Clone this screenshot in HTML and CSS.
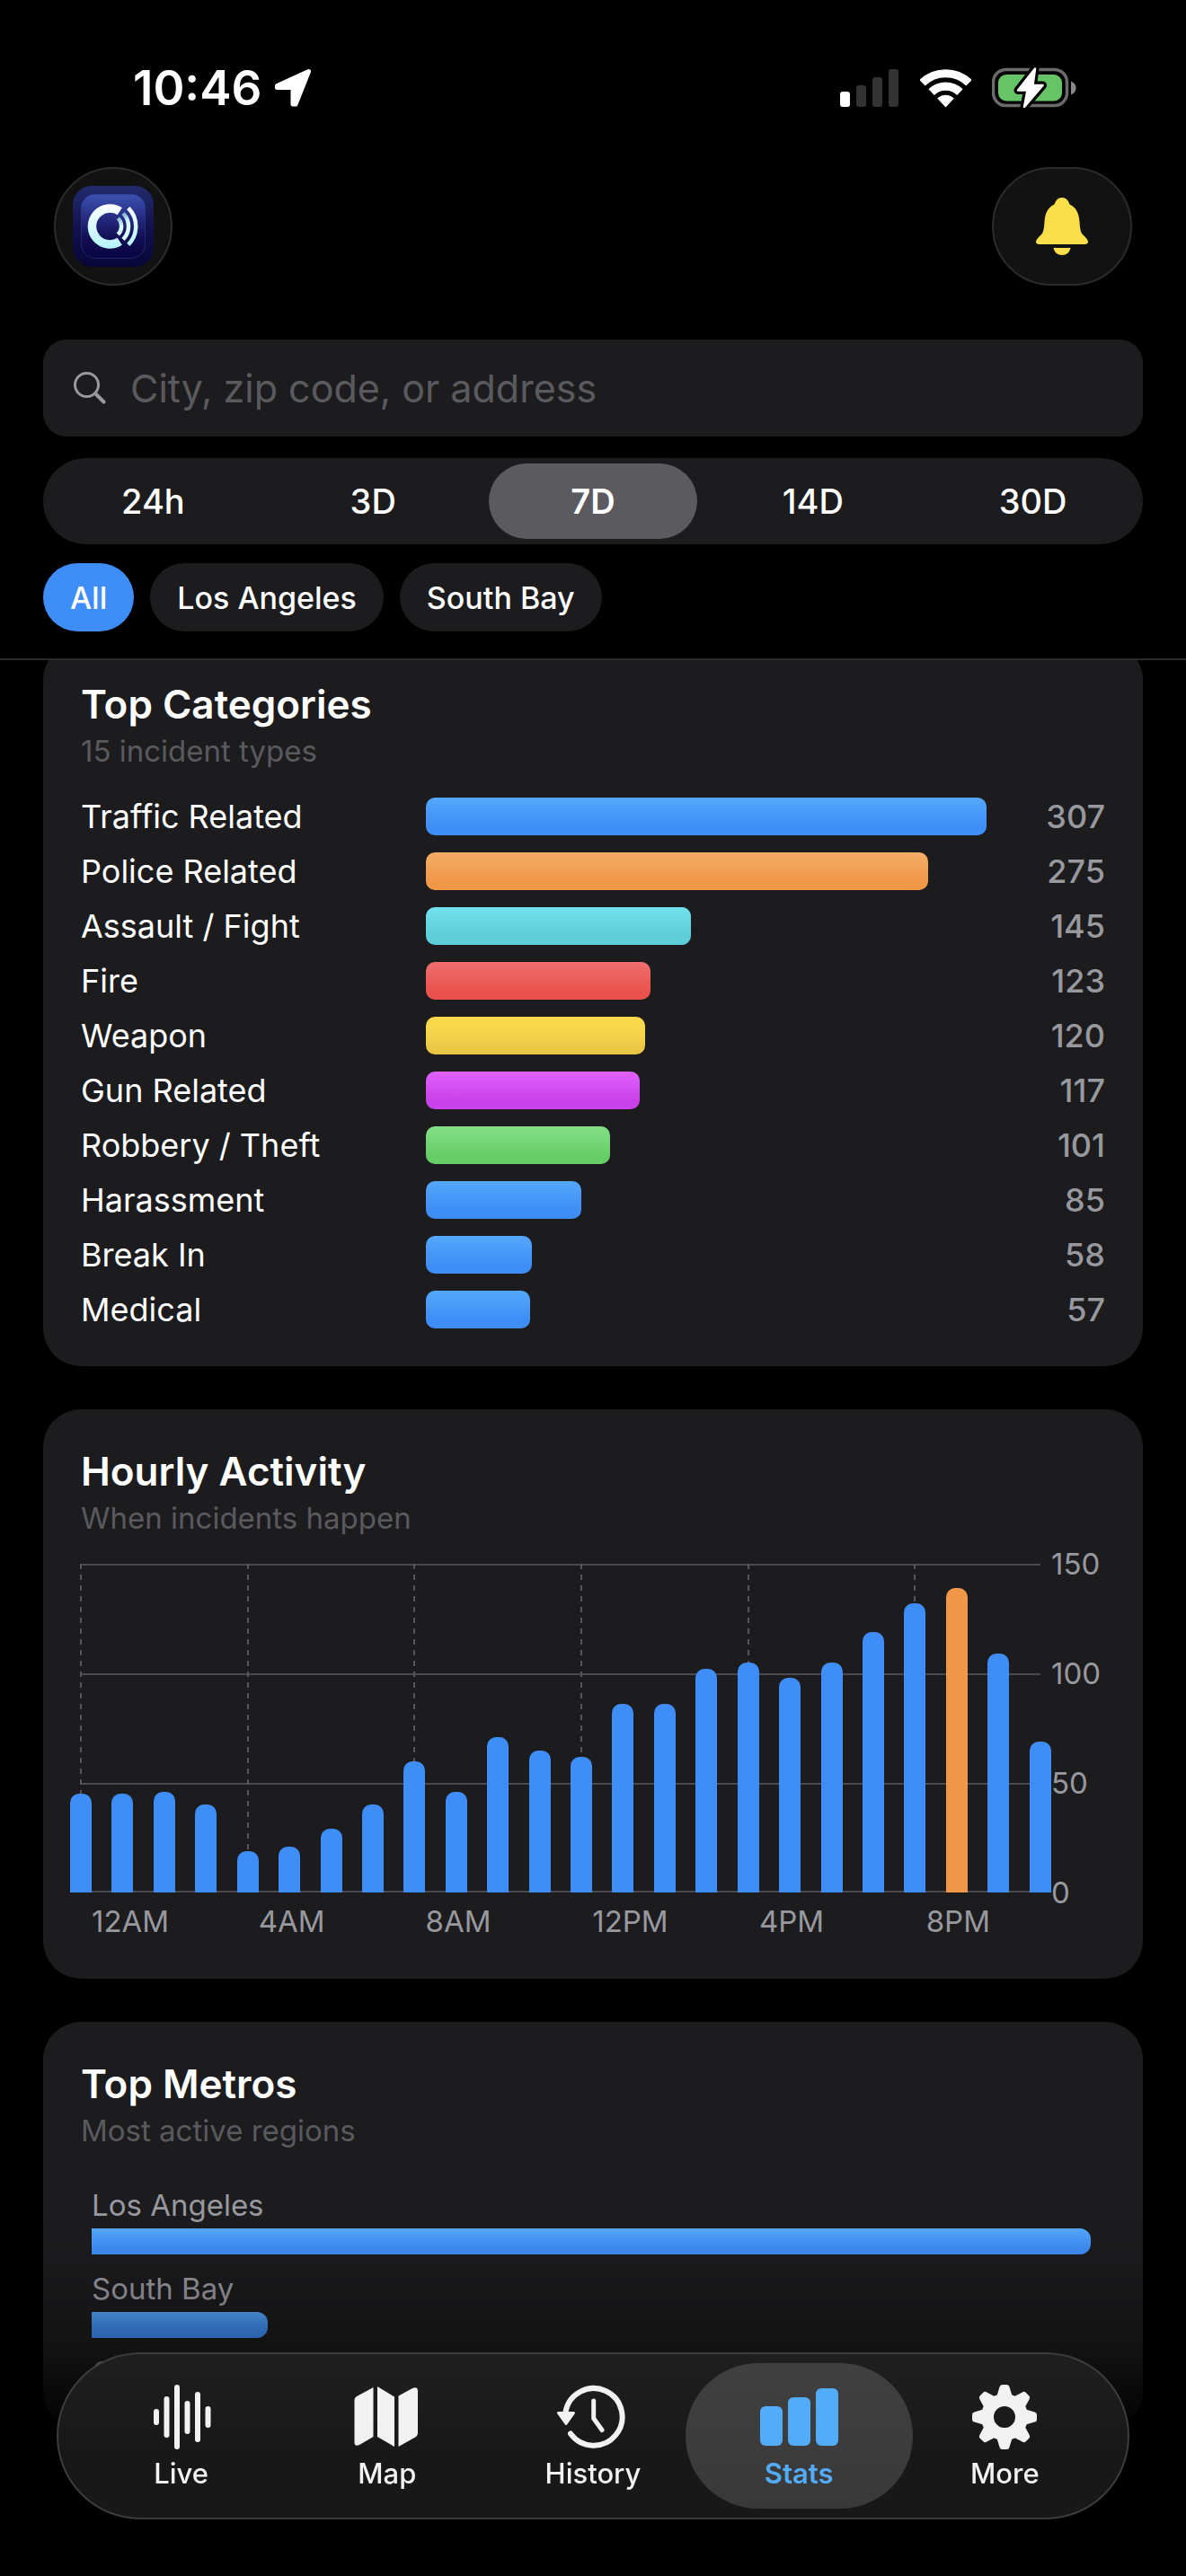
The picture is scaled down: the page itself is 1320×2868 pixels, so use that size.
FILE: index.html
```html
<!DOCTYPE html>
<html lang="en">
<head>
<meta charset="utf-8">
<meta name="viewport" content="width=device-width, initial-scale=1">
<title>Stats</title>
<link rel="stylesheet" href="styles.css">
</head>
<body>
<header class="top">
  <div class="status">
    <div class="status-left">
      <span class="time">10:46</span>
      <svg width="42" height="44" viewBox="0 0 42 44" aria-hidden="true"><path d="M38.500 3.500L3.500 19.500V21.500H21V40H24Z" fill="#fff" stroke="#fff" stroke-width="5" stroke-linejoin="round"/></svg>
    </div>
    <div class="status-right">
      <svg width="66" height="42" viewBox="0 0 66 42" aria-hidden="true"><rect x="0" y="25" width="11" height="17" rx="3" fill="#fff"/><g fill="#333"><rect x="18" y="18" width="11" height="24" rx="3"/><rect x="36" y="9" width="11" height="33" rx="3"/><rect x="54" y="0" width="11" height="42" rx="3"/></g></svg>
      <svg width="57" height="43" viewBox="0 0 57 43" aria-hidden="true"><g fill="none" stroke="#fff" stroke-width="9.200"><path d="M2.500 15.300A37.300 37.300 0 0 1 54.500 15.300"/><path d="M12.600 25.600A22.800 22.800 0 0 1 44.400 25.600"/></g><path d="M19.200 32.500A13.300 13.300 0 0 1 37.800 32.500L28.500 42.500Z" fill="#fff"/></svg>
      <svg width="94" height="46" viewBox="0 0 94 46" aria-hidden="true"><rect x="1.500" y="2.500" width="82" height="40" rx="14" fill="none" stroke="#6b6b6b" stroke-width="3.500"/><rect x="7" y="8" width="71" height="29.500" rx="9" fill="#65c466"/><path d="M88 15.500C92 17 93.500 20 93.500 23S92 29 88 30.500Z" fill="#8a8a8a"/><path d="M48 1.500L29 25.500H39.500L36 44L56.500 20H45.500Z" fill="#fff" stroke="#000" stroke-width="9" stroke-linejoin="round"/><path d="M48 1.500L29 25.500H39.500L36 44L56.500 20H45.500Z" fill="#fff" stroke="#fff" stroke-width="2.500" stroke-linejoin="round"/></svg>
    </div>
  </div>

  <div class="actions">
    <button class="round-btn app-btn" type="button" aria-label="App home">
      <svg width="90" height="90" viewBox="0 0 90 90" aria-hidden="true">
        <defs>
          <linearGradient id="outer" x1="0" y1="0" x2="0" y2="1"><stop offset="0" stop-color="#232c6e"/><stop offset=".5" stop-color="#12134f"/><stop offset="1" stop-color="#080638"/></linearGradient>
          <linearGradient id="inner" x1="0" y1="0" x2="0" y2="1"><stop offset="0" stop-color="#3a52b0"/><stop offset=".35" stop-color="#272c84"/><stop offset=".7" stop-color="#120d52"/><stop offset="1" stop-color="#0a0442"/></linearGradient>
          <linearGradient id="glyph" x1="0" y1="20" x2="0" y2="70" gradientUnits="userSpaceOnUse"><stop offset="0" stop-color="#fff"/><stop offset="1" stop-color="#b2f4fa"/></linearGradient>
          <linearGradient id="wave" x1="46" y1="30" x2="56" y2="44" gradientUnits="userSpaceOnUse"><stop offset="0" stop-color="#4b84b4"/><stop offset="1" stop-color="#d8fbff"/></linearGradient>
        </defs>
        <rect width="90" height="90" rx="21" fill="url(#outer)"/>
        <rect x="9.500" y="9.500" width="71" height="71" rx="15" fill="url(#inner)" stroke="#3c4aa0" stroke-opacity=".4"/>
        <path d="M52.300 28.200A20 20 0 1 0 52.300 61.800" fill="none" stroke="url(#glyph)" stroke-width="9.500"/>
        <path d="M61.800 24.700A28.700 28.700 0 0 1 61.800 65.300" fill="none" stroke="url(#glyph)" stroke-width="4.500"/>
        <path d="M56 30.500A20.500 20.500 0 0 1 56 59.500" fill="none" stroke="url(#wave)" stroke-width="4.500"/>
        <path d="M50.300 36A12.500 12.500 0 0 1 50.300 54" fill="none" stroke="url(#wave)" stroke-width="4.500"/>
      </svg>
    </button>
    <button class="round-btn bell-btn" type="button" aria-label="Notifications">
      <svg width="60" height="66" viewBox="0 0 60 66" fill="#fadf4b" aria-hidden="true"><path d="M30 1C34.500 1 37 4 38.500 8.500C46 12 49 19 49.500 28C50 35 50.500 39 52.500 41.500C55.500 44.500 59 47.500 59 50.500C59 52 57.500 53 55.500 53H4.500C2.500 53 1 52 1 50.500C1 47.500 4.500 44.500 7.500 41.500C9.500 39 10 35 10.500 28C11 19 14 12 21.500 8.500C23 4 25.500 1 30 1Z"/><path d="M20.500 57H39.500C38.500 62 35 65 30 65S21.500 62 20.500 57Z"/></svg>
    </button>
  </div>

  <label class="search">
    <svg width="36" height="36" viewBox="0 0 36 36" fill="none" stroke="#98989f" stroke-width="3" stroke-linecap="round" aria-hidden="true"><circle cx="14.500" cy="14.500" r="13"/><path d="M24 24L33.500 33.500" stroke-width="4"/></svg>
    <input type="text" placeholder="City, zip code, or address" aria-label="Search location">
  </label>

  <div class="segments" role="group" aria-label="Time range">
    <button type="button">24h</button>
    <button type="button">3D</button>
    <button type="button" class="selected" aria-pressed="true">7D</button>
    <button type="button">14D</button>
    <button type="button">30D</button>
  </div>

  <div class="chips" role="group" aria-label="Region">
    <button type="button" class="chip active" aria-pressed="true">All</button>
    <button type="button" class="chip">Los Angeles</button>
    <button type="button" class="chip">South Bay</button>
  </div>
</header>

<main class="content">
  <section class="card">
    <h2>Top Categories</h2>
    <p class="sub">15 incident types</p>
    <ul class="categories">
      <li><span class="name">Traffic Related</span><span class="track"><span class="bar blue" style="width:100%"></span></span><span class="count">307</span></li>
      <li><span class="name">Police Related</span><span class="track"><span class="bar orange" style="width:89.6%"></span></span><span class="count">275</span></li>
      <li><span class="name">Assault / Fight</span><span class="track"><span class="bar cyan" style="width:47.2%"></span></span><span class="count">145</span></li>
      <li><span class="name">Fire</span><span class="track"><span class="bar red" style="width:40.1%"></span></span><span class="count">123</span></li>
      <li><span class="name">Weapon</span><span class="track"><span class="bar yellow" style="width:39.1%"></span></span><span class="count">120</span></li>
      <li><span class="name">Gun Related</span><span class="track"><span class="bar purple" style="width:38.1%"></span></span><span class="count">117</span></li>
      <li><span class="name">Robbery / Theft</span><span class="track"><span class="bar green" style="width:32.9%"></span></span><span class="count">101</span></li>
      <li><span class="name">Harassment</span><span class="track"><span class="bar blue" style="width:27.7%"></span></span><span class="count">85</span></li>
      <li><span class="name">Break In</span><span class="track"><span class="bar blue" style="width:18.9%"></span></span><span class="count">58</span></li>
      <li><span class="name">Medical</span><span class="track"><span class="bar blue" style="width:18.6%"></span></span><span class="count">57</span></li>
    </ul>
  </section>

  <section class="card">
    <h2>Hourly Activity</h2>
    <p class="sub">When incidents happen</p>
    <div class="chart">
      <div class="plot">
        <div class="hours">
          <div class="hour"><i style="height:30%"></i></div>
          <div class="hour"><i style="height:30%"></i></div>
          <div class="hour"><i style="height:30.7%"></i></div>
          <div class="hour"><i style="height:26.7%"></i></div>
          <div class="hour"><i style="height:12.7%"></i></div>
          <div class="hour"><i style="height:14%"></i></div>
          <div class="hour"><i style="height:19.3%"></i></div>
          <div class="hour"><i style="height:26.7%"></i></div>
          <div class="hour"><i style="height:40%"></i></div>
          <div class="hour"><i style="height:30.7%"></i></div>
          <div class="hour"><i style="height:47.3%"></i></div>
          <div class="hour"><i style="height:43.3%"></i></div>
          <div class="hour"><i style="height:41.3%"></i></div>
          <div class="hour"><i style="height:57.3%"></i></div>
          <div class="hour"><i style="height:57.3%"></i></div>
          <div class="hour"><i style="height:68%"></i></div>
          <div class="hour"><i style="height:70%"></i></div>
          <div class="hour"><i style="height:65.3%"></i></div>
          <div class="hour"><i style="height:70%"></i></div>
          <div class="hour"><i style="height:79.3%"></i></div>
          <div class="hour"><i style="height:88%"></i></div>
          <div class="hour peak"><i style="height:92.7%"></i></div>
          <div class="hour"><i style="height:72.7%"></i></div>
          <div class="hour"><i style="height:46%"></i></div>
        </div>
      </div>
      <div class="y-axis"><span>150</span><span>100</span><span>50</span><span>0</span></div>
      <div class="x-axis"><span>12AM</span><span>4AM</span><span>8AM</span><span>12PM</span><span>4PM</span><span>8PM</span></div>
    </div>
  </section>

  <section class="card card-last">
    <h2>Top Metros</h2>
    <p class="sub">Most active regions</p>
    <ul class="metros">
      <li><span>Los Angeles</span><span class="metro-bar" style="width:100%"></span></li>
      <li><span>South Bay</span><span class="metro-bar" style="width:17.6%"></span></li>
      <li><span>Orange County</span><span class="metro-bar" style="width:17.6%"></span></li>
    </ul>
  </section>
</main>

<div class="fade"></div>

<nav class="tabs" aria-label="Main">
  <a href="#live">
    <svg width="88" height="72" viewBox="-2 0 88 72" stroke="#f2f2f2" stroke-width="6" stroke-linecap="round" aria-hidden="true"><path d="M14 30V42M25.500 16V56M37 3V69M48.500 21V52M60 11V61M71.500 27V45"/></svg>
    <span>Live</span>
  </a>
  <a href="#map">
    <svg width="88" height="72" viewBox="-2 0 88 72" fill="#f2f2f2" aria-hidden="true"><path d="M26.500 3V58L11 67Q5.500 69.500 5.500 64V17Q5.500 14.500 8 13Z"/><path d="M31 2L50 13.500V69L31 58Z"/><path d="M54.500 12.500L70 4Q76 1.500 76 7V54Q76 56.500 74 58L54.500 69Z"/></svg>
    <span>Map</span>
  </a>
  <a href="#history">
    <svg width="88" height="72" viewBox="-2 0 88 72" fill="none" stroke="#f2f2f2" stroke-linecap="round" stroke-linejoin="round" aria-hidden="true"><path d="M11.500 30A31.800 31.800 0 1 1 17 54.500" stroke-width="6"/><path d="M42.700 18V37.500L52 50.500" stroke-width="5"/><path d="M3.500 31.500H20.500L12 43.500Z" fill="#f2f2f2" stroke-width="3"/></svg>
    <span>History</span>
  </a>
  <a href="#stats" class="current" aria-current="page">
    <svg width="88" height="72" viewBox="-2 0 88 72" fill="#53acf9" aria-hidden="true"><rect x="-1" y="24" width="25" height="44" rx="6"/><rect x="30" y="14" width="25" height="54" rx="6"/><rect x="61" y="4" width="25" height="64" rx="6"/></svg>
    <span>Stats</span>
  </a>
  <a href="#more">
    <svg width="88" height="72" viewBox="-2 0 88 72" aria-hidden="true">
      <defs><path id="tooth" d="M36.500 2.500Q37 0 39.500 0H44.500Q47 0 47.500 2.500L51 14H33Z" fill="#f2f2f2"/></defs>
      <use href="#tooth"/><use href="#tooth" transform="rotate(45 42 36)"/><use href="#tooth" transform="rotate(90 42 36)"/><use href="#tooth" transform="rotate(135 42 36)"/><use href="#tooth" transform="rotate(180 42 36)"/><use href="#tooth" transform="rotate(225 42 36)"/><use href="#tooth" transform="rotate(270 42 36)"/><use href="#tooth" transform="rotate(315 42 36)"/>
      <circle cx="42" cy="36" r="19" fill="none" stroke="#f2f2f2" stroke-width="14"/>
    </svg>
    <span>More</span>
  </a>
</nav>
</body>
</html>
```
FILE: styles.css
```css
* {
  box-sizing: border-box;
}

body {
  margin: 0;
  min-height: 100vh;
  background: #000;
  color: #fff;
  font-family: Inter, "Liberation Sans", sans-serif;
}

button,
input {
  margin: 0;
  padding: 0;
  border: 0;
  background: none;
  color: inherit;
  font: inherit;
}

h2,
p,
ul {
  margin: 0;
  padding: 0;
}

ul {
  list-style: none;
}

svg {
  display: block;
  flex: none;
}

/* Header */
.top {
  padding: 66px 48px 30px;
  border-bottom: 2px solid #2b2b2d;
}

.status {
  display: flex;
  justify-content: space-between;
  align-items: center;
  padding: 0 74px 0 100px;
  margin-bottom: 56px;
}

.status-left,
.status-right {
  display: flex;
  align-items: center;
}

.status-left {
  gap: 14px;
}

.status-right {
  gap: 23px;
}

.time {
  font-size: 53px;
  line-height: 64px;
  font-weight: 600;
}

.actions {
  display: flex;
  justify-content: space-between;
  padding: 0 12px;
  margin-bottom: 60px;
}

.round-btn {
  display: flex;
  align-items: center;
  justify-content: center;
  height: 132px;
  border: 2px solid #2c2c2c;
  border-radius: 66px;
  background: #121212;
}

.app-btn {
  width: 132px;
}

.bell-btn {
  width: 156px;
}

.search {
  display: flex;
  align-items: center;
  gap: 27px;
  height: 108px;
  padding: 0 34px;
  margin-bottom: 24px;
  border-radius: 26px;
  background: #1c1c1e;
}

.search input {
  flex: 1;
  min-width: 0;
  font-size: 43px;
  outline: none;
}

.search input::placeholder {
  color: #5a5a5e;
  opacity: 1;
}

.segments {
  display: grid;
  grid-template-columns: repeat(5, 1fr);
  gap: 12px;
  height: 96px;
  padding: 6px;
  margin-bottom: 21px;
  border-radius: 48px;
  background: #1c1c1e;
  font-size: 38px;
  font-weight: 500;
}

.segments button {
  border-radius: 42px;
}

.segments .selected {
  background: #5b5a5f;
  font-weight: 600;
}

.chips {
  display: flex;
  gap: 18px;
}

.chip {
  height: 76px;
  padding: 0 30px;
  border-radius: 38px;
  background: #1c1c1e;
  font-size: 34px;
  font-weight: 500;
}

.chip.active {
  background: #3f8ef7;
}

/* Cards */
.content {
  display: flex;
  flex-direction: column;
  gap: 48px;
  padding: 0 48px 162px;
  overflow: hidden;
}

.card {
  padding: 42px;
  border-radius: 42px;
  background: #1c1c1e;
}

/* The first card is scrolled part way under the header. */
.card:first-child {
  margin-top: -20px;
}

.card-last {
  padding-bottom: 10px;
}

h2 {
  margin-bottom: 3px;
  font-size: 44px;
  line-height: 54px;
  font-weight: 600;
}

.sub {
  color: #5a5a5e;
  font-size: 33px;
  line-height: 44px;
}

/* Top categories */
.categories {
  display: flex;
  flex-direction: column;
  gap: 19px;
  margin-top: 30px;
}

.categories li {
  display: grid;
  grid-template-columns: 384px 1fr 132px;
  align-items: center;
  height: 42px;
  font-size: 36px;
  line-height: 42px;
}

.track {
  height: 42px;
}

.bar {
  display: block;
  height: 42px;
  border-radius: 10px;
}

.blue { background: linear-gradient(#55a8fb, #3f8ef7 75%); }
.orange { background: linear-gradient(#f4ae68, #f09848 75%); }
.cyan { background: linear-gradient(#71e2ee, #5ecedb 75%); }
.red { background: linear-gradient(#ef7070, #ea534d 75%); }
.yellow { background: linear-gradient(#fad84b 25%, #e7c443); }
.purple { background: linear-gradient(#e062fb, #c941ea 75%); }
.green { background: linear-gradient(#85e088, #67cd67 75%); }

.count {
  color: #98989f;
  font-weight: 500;
  text-align: right;
}

/* Hourly activity */
.chart {
  display: grid;
  grid-template-columns: 1fr 60px;
  column-gap: 12px;
  row-gap: 10px;
  margin-top: 29px;
  color: #98989f;
  font-size: 33px;
  line-height: 44px;
}

.plot {
  height: 366px;
  background: repeating-linear-gradient(#4a4a4c 0 2px, transparent 2px 122px);
  border-bottom: 2px solid #4a4a4c;
}

.hours {
  display: flex;
  justify-content: space-between;
  height: 366px;
  margin: 0 -12px;
}

.hour {
  display: flex;
  align-items: flex-end;
  width: 24px;
}

.hour:nth-child(4n + 1) {
  background: repeating-linear-gradient(#565658 0 6px, transparent 6px 12px) center / 2px 100% no-repeat;
}

.hour i {
  flex: 1;
  border-radius: 10px 10px 0 0;
  background: #3f8ef7;
}

.peak i {
  background: #f09848;
}

.y-axis {
  display: flex;
  flex-direction: column;
  justify-content: space-between;
  margin: -22px 0;
}

.x-axis {
  display: flex;
}

.x-axis span {
  flex: 0 0 calc(100% * 4 / 23);
  padding-left: 12px;
}

.x-axis span:last-child {
  flex-basis: calc(100% * 3 / 23);
}

/* Top metros */
.metros {
  display: flex;
  flex-direction: column;
  gap: 16px;
  margin-top: 39px;
  padding: 0 16px 0 12px;
  color: #98989f;
  font-size: 33px;
  line-height: 44px;
}

.metros li {
  display: flex;
  flex-direction: column;
  gap: 4px;
}

.metro-bar {
  height: 29px;
  border-radius: 0 12px 12px 0;
  background: linear-gradient(#55a8fb, #3f8ef7 75%);
}

/* Bottom bar */
.fade {
  position: fixed;
  right: 0;
  bottom: 0;
  left: 0;
  height: 400px;
  background: linear-gradient(transparent, rgba(0, 0, 0, 0.05) 12%, rgba(0, 0, 0, 0.35) 38%, rgba(0, 0, 0, 0.85) 56%, #000 64%);
  pointer-events: none;
}

.tabs {
  position: fixed;
  right: 63px;
  bottom: 63px;
  left: 63px;
  display: grid;
  grid-template-columns: repeat(5, 1fr);
  padding: 10px 22px;
  border: 2px solid #3c3c3c;
  border-radius: 93px;
  background: linear-gradient(#1f1f1f, #181818 60%);
}

.tabs a {
  display: flex;
  flex-direction: column;
  align-items: center;
  gap: 9px;
  margin: 0 -12px;
  padding: 24px 0 21px;
  border-radius: 81px;
  color: #f2f2f2;
  font-size: 31px;
  line-height: 36px;
  font-weight: 500;
  text-decoration: none;
}

.tabs .current {
  background: linear-gradient(#404040, #393939);
  color: #53acf9;
  font-weight: 600;
}
```
